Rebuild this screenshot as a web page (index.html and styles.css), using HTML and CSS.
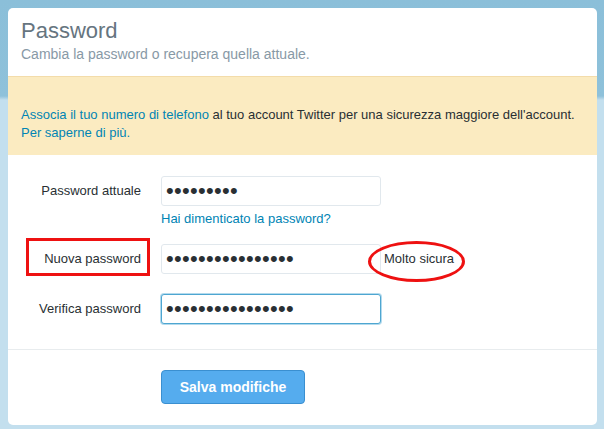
FILE: index.html
```html
<!DOCTYPE html>
<html lang="it">
<head>
<meta charset="utf-8">
<title>Password</title>
<link rel="stylesheet" href="styles.css">
</head>
<body>
<div class="card">
  <header class="head">
    <h1 class="title">Password</h1>
    <p class="subtitle">Cambia la password o recupera quella attuale.</p>
  </header>
  <div class="banner">
    <a class="link" href="#">Associa il tuo numero di telefono</a> al tuo account Twitter per una sicurezza maggiore dell'account.<br>
    <a class="link" href="#">Per saperne di più.</a>
  </div>
  <form class="form">
    <div class="row">
      <label class="label" for="cur">Password attuale</label>
      <div class="field">
        <input class="input" id="cur" type="password" value="abcdefghi">
        <a class="link forgot" href="#">Hai dimenticato la password?</a>
      </div>
    </div>
    <div class="row row-new">
      <label class="label" for="new">Nuova password<span class="mark-box"></span></label>
      <div class="field">
        <input class="input" id="new" type="password" value="abcdefghijklmnop">
      </div>
      <span class="strength">Molto sicura<span class="mark-ellipse"></span></span>
    </div>
    <div class="row row-verify">
      <label class="label" for="ver">Verifica password</label>
      <div class="field">
        <input class="input input-focus" id="ver" type="password" value="abcdefghijklmnop">
      </div>
    </div>
  </form>
  <div class="actions">
    <button class="btn" type="button">Salva modifiche</button>
  </div>
</div>
</body>
</html>
```

FILE: styles.css
```css
* { box-sizing: border-box; }
html, body { margin: 0; padding: 0; }
body {
  width: 604px;
  height: 429px;
  overflow: hidden;
  padding: 8px 7px 0 8px;
  font-family: "Liberation Sans", Arial, sans-serif;
  color: #292f33;
  background: linear-gradient(to bottom, #8bbfd9 0, #8ec1da 96px, #c3dfee 100px, #c3dfee 100%);
}
.card {
  width: 589px;
  height: 417px;
  background: #fff;
  border-radius: 5px;
  overflow: hidden;
}
.head {
  padding: 10px 13px 13px;
}
.title {
  margin: 0;
  font-size: 22px;
  line-height: 26px;
  font-weight: normal;
  color: #66757f;
}
.subtitle {
  margin: 1px 0 0;
  font-size: 14px;
  line-height: 18px;
  color: #8899a6;
}
.banner {
  border-top: 1px solid #f3dcaa;
  background: #fbebc1;
  padding: 29px 13px 13px;
  font-size: 13px;
  line-height: 18px;
  color: #292f33;
}
.link {
  color: #0084b4;
  text-decoration: none;
}
.form {
  padding: 21px 0 25px;
  border-bottom: 1px solid #e8ecee;
}
.row {
  display: flex;
  align-items: flex-start;
}
.row-new { margin-top: 16px; }
.row-verify { margin-top: 20px; }
.label {
  position: relative;
  width: 133px;
  margin-right: 20px;
  text-align: right;
  font-size: 13px;
  line-height: 30px;
  color: #292f33;
}
.field {
  display: flex;
  flex-direction: column;
  width: 220px;
}
.input {
  width: 220px;
  height: 30px;
  margin: 0;
  padding: 0 4px;
  border: 1px solid #e1e8ed;
  border-radius: 3px;
  background: #fff;
  font-family: "Liberation Sans", Arial, sans-serif;
  font-size: 22px;
  letter-spacing: 0.3px;
  color: #292f33;
  outline: none;
}
.input-focus {
  border-color: #4ea6d1;
  box-shadow: 0 0 0 1px rgba(86, 172, 214, 0.45);
}
.forgot {
  margin-top: 4px;
  font-size: 13px;
  line-height: 18px;
}
.strength {
  position: relative;
  margin-left: 3px;
  font-size: 13px;
  line-height: 30px;
  color: #292f33;
}
.mark-box {
  position: absolute;
  left: 18px;
  top: -6px;
  width: 124px;
  height: 38px;
  border: 3px solid #ee1111;
}
.mark-ellipse {
  position: absolute;
  left: -16px;
  top: -3px;
  width: 97px;
  height: 41px;
  border: 3px solid #ee1111;
  border-radius: 50%;
}
.actions {
  padding: 20px 0 0 153px;
}
.btn {
  width: 144px;
  height: 34px;
  margin: 0;
  padding: 0;
  border: 1px solid #3a8fd0;
  border-radius: 4px;
  background: #55acee;
  color: #fff;
  font-family: "Liberation Sans", Arial, sans-serif;
  font-size: 14px;
  font-weight: bold;
  cursor: pointer;
}
```
